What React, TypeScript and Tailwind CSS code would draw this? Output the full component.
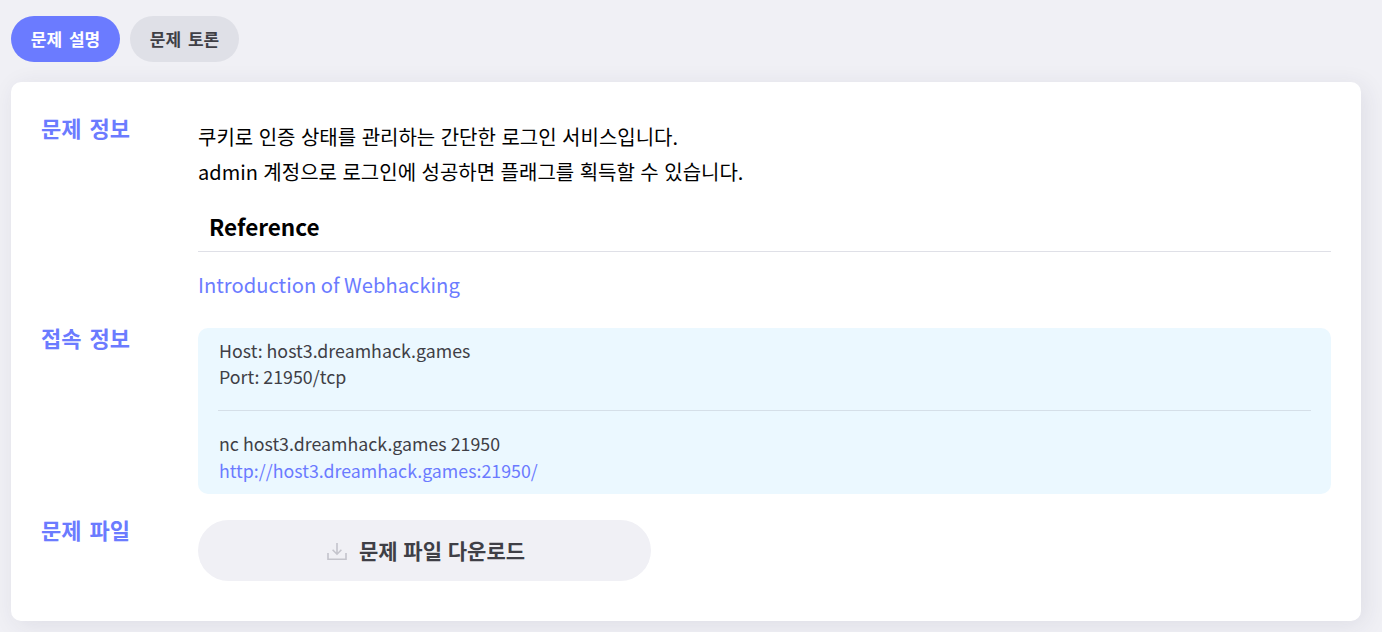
import React from 'react';

const FONT = "font-['Noto_Sans_CJK_KR','Noto_Sans',sans-serif]";

const DownloadIcon = () => (
  <svg width="20" height="20" viewBox="0 0 20 20" fill="none" stroke="#c4c4cc" strokeWidth="1.6" className="shrink-0">
    <path d="M1 12v6.2h18V12" />
    <path d="M10 2v11M5.6 8.8 10 13.2l4.4-4.4" />
  </svg>
);

const SectionLabel: React.FC<{ children: React.ReactNode; className?: string }> = ({ children, className = '' }) => (
  <div className={`w-[187px] shrink-0 pl-[30px] text-[22px] leading-[30px] font-bold [word-spacing:3px] text-[#6b7bff] ${className}`}>{children}</div>
);

export default function App() {
  return (
    <div className={`${FONT} h-[632px] overflow-hidden bg-[#f0f0f5] pl-[11px] pr-[21px] pt-[16px]`}>
      <div className="flex gap-[10px]">
        <button className="h-[46px] w-[109px] rounded-full bg-[#6b7bff] text-[17px] font-bold [word-spacing:3px] text-white">문제 설명</button>
        <button className="h-[46px] w-[109px] rounded-full bg-[#dfe0e7] text-[17px] font-bold [word-spacing:3px] text-[#3f3f46]">문제 토론</button>
      </div>

      <div className="mt-[20px] h-[539px] rounded-[10px] bg-white pr-[30px] pt-[32px] shadow-[4px_4px_24px_rgba(40,40,80,0.09)]">
        <div className="flex">
          <SectionLabel className="-mt-[2px]">문제 정보</SectionLabel>
          <div className="min-w-0 flex-1 pt-[5px] text-black">
            <p className="text-[20px] leading-[35px] [word-spacing:1px]">쿠키로 인증 상태를 관리하는 간단한 로그인 서비스입니다.</p>
            <p className="text-[20px] leading-[35px] [word-spacing:1px]">admin 계정으로 로그인에 성공하면 플래그를 획득할 수 있습니다.</p>
            <h2 className="mt-[19px] border-b border-[#dfe0e7] pb-[7px] pl-[11px] text-[22.5px] leading-[36px] font-bold">Reference</h2>
            <a className="mt-[15px] block text-[20.2px] leading-[35px] text-[#6b7bff]">Introduction of Webhacking</a>
          </div>
        </div>

        <div className="mt-[26px] flex">
          <SectionLabel className="-mt-[6px]">접속 정보</SectionLabel>
          <div className="min-w-0 flex-1 rounded-[10px] bg-[#ebf8ff] px-[21px] pt-[9px] pb-[11px] text-[17.8px] leading-[26px] text-[#3f3f46]">
            <p>Host: host3.dreamhack.games</p>
            <p>Port: 21950/tcp</p>
            <div className="-mx-px mt-[21px] mb-[19px] h-px bg-[#d5dfe8]" />
            <p>nc host3.dreamhack.games 21950</p>
            <a className="mt-px block text-[#6b7bff]">http://host3.dreamhack.games:21950/</a>
          </div>
        </div>

        <div className="mt-[26px] flex">
          <SectionLabel className="-mt-[6px]">문제 파일</SectionLabel>
          <button className="flex h-[61px] w-[453px] items-center justify-center gap-[12px] rounded-full bg-[#f0f0f5] pl-[3px] text-[21px] font-bold [word-spacing:1px] text-[#3f3f46]">
            <DownloadIcon />
            문제 파일 다운로드
          </button>
        </div>
      </div>
    </div>
  );
}
